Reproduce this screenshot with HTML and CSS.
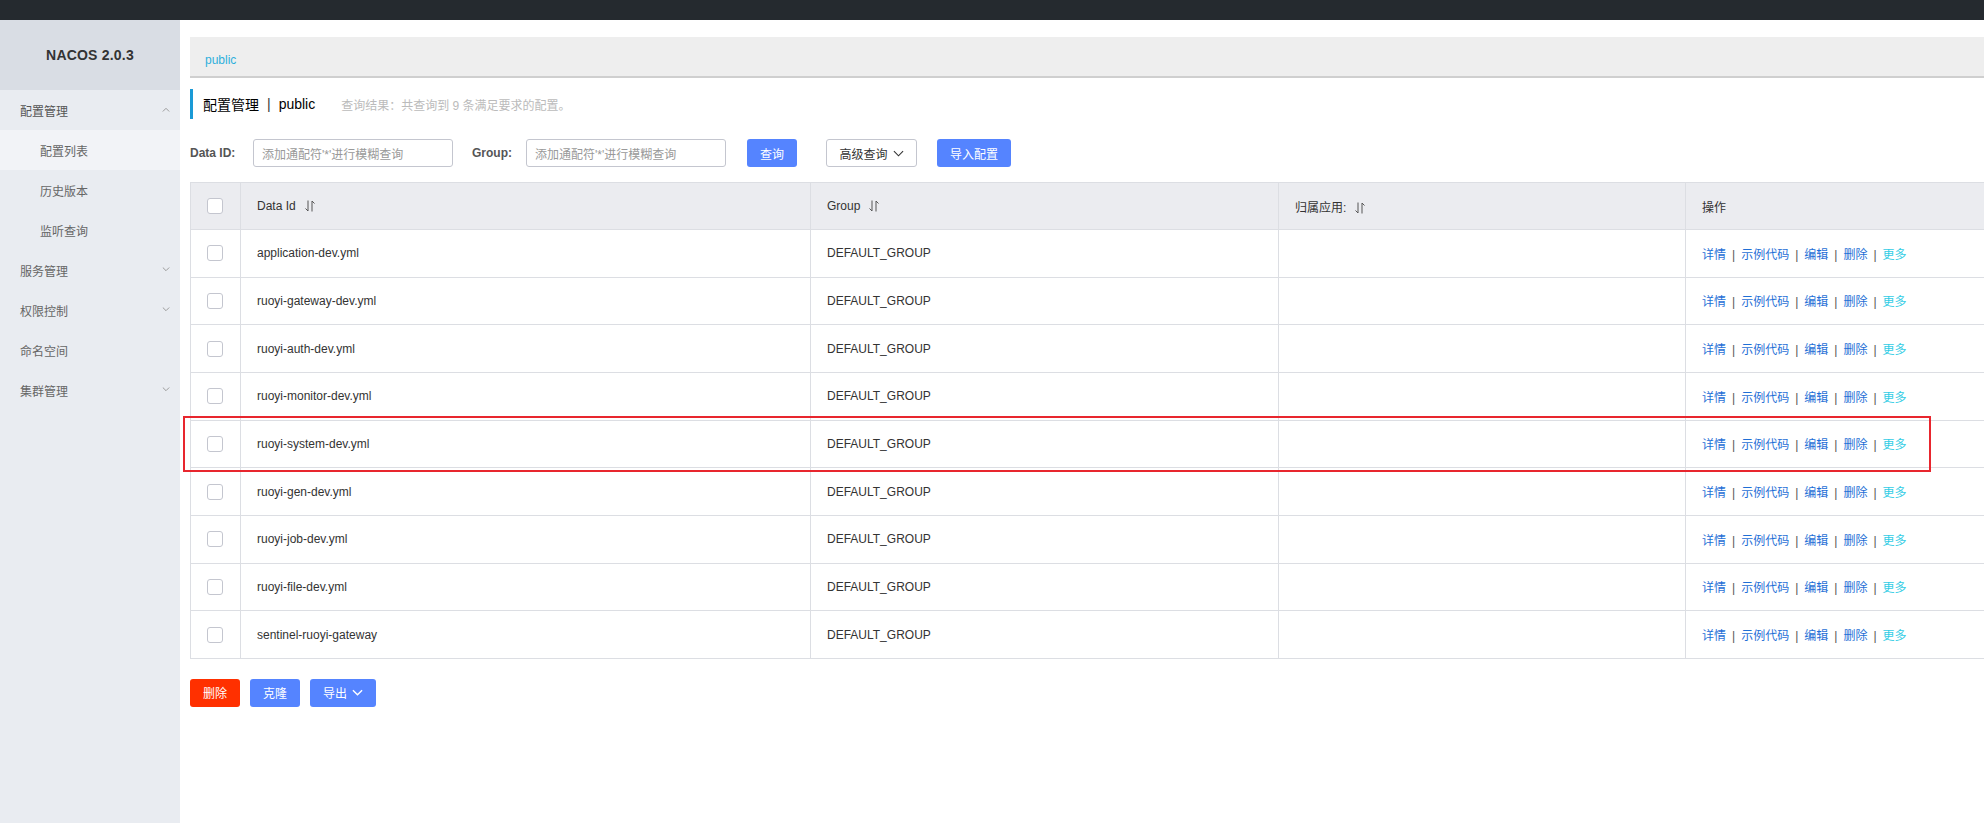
FILE: index.html
```html
<!DOCTYPE html>
<html lang="zh-CN">
<head>
<meta charset="utf-8">
<title>Nacos</title>
<link rel="stylesheet" href="styles.css">
</head>
<body>
<div class="topbar"></div>
<div class="layout">
  <aside class="sidebar">
    <div class="brand">NACOS 2.0.3</div>
    <ul class="menu">
      <li class="menu-item open">配置管理<svg class="chev" viewBox="0 0 10 6"><path d="M1 5.5 L5 1.5 L9 5.5"/></svg></li>
      <li class="sub active">配置列表</li>
      <li class="sub">历史版本</li>
      <li class="sub">监听查询</li>
      <li class="menu-item">服务管理<svg class="chev" viewBox="0 0 10 6"><path d="M1 0.5 L5 4.5 L9 0.5"/></svg></li>
      <li class="menu-item">权限控制<svg class="chev" viewBox="0 0 10 6"><path d="M1 0.5 L5 4.5 L9 0.5"/></svg></li>
      <li class="menu-item">命名空间</li>
      <li class="menu-item">集群管理<svg class="chev" viewBox="0 0 10 6"><path d="M1 0.5 L5 4.5 L9 0.5"/></svg></li>
    </ul>
  </aside>
  <main class="main">
    <div class="content">
      <div class="crumb"><span class="crumb-link">public</span></div>
      <div class="title-row">
        <h1 class="title">配置管理<span class="sep">|</span>public</h1>
        <span class="result">查询结果：共查询到 9 条满足要求的配置。</span>
      </div>
      <div class="search">
        <label class="lbl">Data ID:</label>
        <div class="input">添加通配符'*'进行模糊查询</div>
        <label class="lbl lbl-group">Group:</label>
        <div class="input">添加通配符'*'进行模糊查询</div>
        <button class="btn primary btn-query">查询</button>
        <button class="btn normal btn-adv">高级查询<svg class="down" viewBox="0 0 12 7"><path d="M1 1 L6 6 L11 1"/></svg></button>
        <button class="btn primary btn-import">导入配置</button>
      </div>
      <div class="table-wrap">
        <table class="grid">
          <colgroup>
            <col class="c-check"><col class="c-id"><col class="c-group"><col class="c-app"><col class="c-op">
          </colgroup>
          <thead>
            <tr>
              <th class="cb-cell"><span class="cb"></span></th>
              <th>Data Id<svg class="sort" viewBox="0 0 10 12"><path d="M3 0.5 V11 L0.5 8.5 M7 11.5 V1 L9.5 3.5"/></svg></th>
              <th>Group<svg class="sort" viewBox="0 0 10 12"><path d="M3 0.5 V11 L0.5 8.5 M7 11.5 V1 L9.5 3.5"/></svg></th>
              <th>归属应用:<svg class="sort" viewBox="0 0 10 12"><path d="M3 0.5 V11 L0.5 8.5 M7 11.5 V1 L9.5 3.5"/></svg></th>
              <th>操作</th>
            </tr>
          </thead>
          <tbody>
            <tr><td class="cb-cell"><span class="cb"></span></td><td>application-dev.yml</td><td>DEFAULT_GROUP</td><td></td><td class="ops"><a>详情</a><i>|</i><a>示例代码</a><i>|</i><a>编辑</a><i>|</i><a>删除</a><i>|</i><a class="more">更多</a></td></tr>
            <tr><td class="cb-cell"><span class="cb"></span></td><td>ruoyi-gateway-dev.yml</td><td>DEFAULT_GROUP</td><td></td><td class="ops"><a>详情</a><i>|</i><a>示例代码</a><i>|</i><a>编辑</a><i>|</i><a>删除</a><i>|</i><a class="more">更多</a></td></tr>
            <tr><td class="cb-cell"><span class="cb"></span></td><td>ruoyi-auth-dev.yml</td><td>DEFAULT_GROUP</td><td></td><td class="ops"><a>详情</a><i>|</i><a>示例代码</a><i>|</i><a>编辑</a><i>|</i><a>删除</a><i>|</i><a class="more">更多</a></td></tr>
            <tr><td class="cb-cell"><span class="cb"></span></td><td>ruoyi-monitor-dev.yml</td><td>DEFAULT_GROUP</td><td></td><td class="ops"><a>详情</a><i>|</i><a>示例代码</a><i>|</i><a>编辑</a><i>|</i><a>删除</a><i>|</i><a class="more">更多</a></td></tr>
            <tr><td class="cb-cell"><span class="cb"></span></td><td>ruoyi-system-dev.yml</td><td>DEFAULT_GROUP</td><td></td><td class="ops"><a>详情</a><i>|</i><a>示例代码</a><i>|</i><a>编辑</a><i>|</i><a>删除</a><i>|</i><a class="more">更多</a></td></tr>
            <tr><td class="cb-cell"><span class="cb"></span></td><td>ruoyi-gen-dev.yml</td><td>DEFAULT_GROUP</td><td></td><td class="ops"><a>详情</a><i>|</i><a>示例代码</a><i>|</i><a>编辑</a><i>|</i><a>删除</a><i>|</i><a class="more">更多</a></td></tr>
            <tr><td class="cb-cell"><span class="cb"></span></td><td>ruoyi-job-dev.yml</td><td>DEFAULT_GROUP</td><td></td><td class="ops"><a>详情</a><i>|</i><a>示例代码</a><i>|</i><a>编辑</a><i>|</i><a>删除</a><i>|</i><a class="more">更多</a></td></tr>
            <tr><td class="cb-cell"><span class="cb"></span></td><td>ruoyi-file-dev.yml</td><td>DEFAULT_GROUP</td><td></td><td class="ops"><a>详情</a><i>|</i><a>示例代码</a><i>|</i><a>编辑</a><i>|</i><a>删除</a><i>|</i><a class="more">更多</a></td></tr>
            <tr><td class="cb-cell"><span class="cb"></span></td><td>sentinel-ruoyi-gateway</td><td>DEFAULT_GROUP</td><td></td><td class="ops"><a>详情</a><i>|</i><a>示例代码</a><i>|</i><a>编辑</a><i>|</i><a>删除</a><i>|</i><a class="more">更多</a></td></tr>
          </tbody>
        </table>
        <div class="highlight"></div>
      </div>
      <div class="actions">
        <button class="btn danger">删除</button>
        <button class="btn primary">克隆</button>
        <button class="btn primary btn-export">导出<svg class="down white" viewBox="0 0 12 7"><path d="M1 1 L6 6 L11 1"/></svg></button>
      </div>
    </div>
  </main>
</div>
</body>
</html>
```
FILE: styles.css
```css
* { box-sizing: border-box; }
html, body { margin: 0; padding: 0; }
body {
  width: 1984px;
  height: 823px;
  overflow: hidden;
  font-family: "Liberation Sans", "Noto Sans CJK SC", sans-serif;
  font-size: 12px;
  color: #333;
  background: #fff;
}
.topbar { height: 20px; background: #252a2f; }
.layout { display: flex; height: 803px; }
.sidebar { width: 180px; flex: none; background: #e9ecf1; }
.brand {
  height: 70px;
  background: #d9dde4;
  display: flex;
  align-items: center;
  justify-content: center;
  font-weight: bold;
  font-size: 14px;
  color: #333;
  letter-spacing: 0.2px;
}
.menu { list-style: none; margin: 0; padding: 0; }
.menu li {
  height: 40px;
  display: flex;
  align-items: center;
  font-size: 12px;
  color: #666;
  position: relative;
}
.menu-item { padding-left: 20px; }
.menu-item.open { color: #555; }
.sub { padding-left: 40px; }
.sub.active { background: #f2f3f7; }
.chev {
  position: absolute;
  right: 10px;
  top: 17px;
  width: 8px;
  height: 5px;
  fill: none;
  stroke: #999;
  stroke-width: 1.2;
}
.main { flex: 1; min-width: 0; overflow: hidden; padding-left: 10px; padding-top: 17px; }
.content { width: 1900px; }
.crumb {
  height: 41px;
  background: #eeeeee;
  border-bottom: 2px solid #cfcfcf;
  display: flex;
  align-items: center;
  padding-left: 15px;
  padding-top: 6px;
}
.crumb-link { color: #2eb0dc; font-size: 12px; }
.title-row { display: flex; align-items: center; margin-top: 11px; height: 30px; }
.title {
  margin: 0;
  height: 30px;
  border-left: 3px solid #1a9ad6;
  padding-left: 10px;
  font-size: 14px;
  font-weight: normal;
  color: #000;
  display: flex;
  align-items: center;
}
.title .sep { margin: 0 8px; color: #333; }
.result { color: #bbb; font-size: 12px; margin-left: 26px; }
.search { display: flex; align-items: center; margin-top: 20px; height: 28px; }
.lbl { font-weight: bold; color: #555; font-size: 12px; width: 63px; }
.lbl-group { width: 54px; margin-left: 19px; }
.input {
  width: 200px;
  height: 28px;
  border: 1px solid #c4c6cf;
  border-radius: 3px;
  padding-left: 8px;
  display: flex;
  align-items: center;
  color: #999;
  font-size: 12px;
}
.btn {
  height: 28px;
  border-radius: 3px;
  border: 1px solid transparent;
  font-family: inherit;
  font-size: 12px;
  padding: 0 12px;
  display: inline-flex;
  align-items: center;
  justify-content: center;
  cursor: pointer;
}
.primary { background: #5584ff; color: #fff; }
.normal { background: #fff; border-color: #c4c6cf; color: #333; }
.danger { background: #ff3000; color: #fff; }
.btn-query { margin-left: 21px; width: 50px; }
.btn-adv { margin-left: 29px; width: 91px; }
.btn-import { margin-left: 20px; width: 74px; }
.down { width: 11px; height: 7px; margin-left: 5px; fill: none; stroke: #333; stroke-width: 1.2; }
.down.white { stroke: #fff; stroke-width: 1.5; }
.table-wrap { position: relative; margin-top: 15px; }
.grid { border-collapse: collapse; table-layout: fixed; width: 1900px; }
.c-check { width: 50px; }
.c-id { width: 570px; }
.c-group { width: 468px; }
.c-app { width: 407px; }
.grid th, .grid td {
  border: 1px solid #dcdee3;
  text-align: left;
  padding: 0 16px;
  font-size: 12px;
  color: #333;
  font-weight: normal;
  white-space: nowrap;
}
.grid th { background: #ebecf0; height: 47px; }
.grid td { height: 47.67px; }
.grid th.cb-cell, .grid td.cb-cell { padding: 0 0 0 16px; }
.cb {
  display: block;
  width: 16px;
  height: 16px;
  border: 1px solid #c4c6cf;
  border-radius: 3px;
  background: #fff;
}
.sort { width: 10px; height: 12px; margin-left: 9px; vertical-align: -2px; fill: none; stroke: #555; stroke-width: 1; }
.ops a { color: #1f6fd6; }
.ops a.more { color: #33cde5; }
.ops i { font-style: normal; color: #555; margin: 0 6px; }
.highlight {
  position: absolute;
  left: -7px;
  top: 234px;
  width: 1748px;
  height: 56px;
  border: 2px solid #e8262e;
  pointer-events: none;
}
.actions { display: flex; gap: 10px; margin-top: 20px; }
.actions .btn { width: 50px; padding: 0; }
.actions .btn-export { width: 66px; }
```
